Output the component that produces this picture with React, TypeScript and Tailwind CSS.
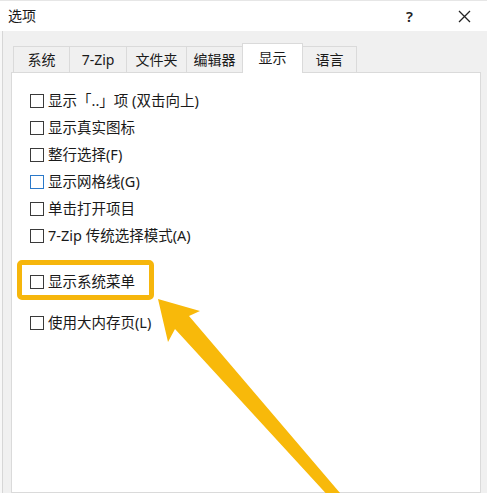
import React from "react";

const FONT = { fontFamily: '"Noto Sans", "Noto Sans CJK SC", sans-serif' };

function Box({ blue }: { blue?: boolean }) {
  return (
    <span
      className={
        "inline-block w-[14px] h-[14px] shrink-0 border bg-white " +
        (blue ? "border-[#2b79c9]" : "border-[#3a3a3a]")
      }
    />
  );
}

function Row({ label, blue, className }: { label: string; blue?: boolean; className?: string }) {
  return (
    <div className={"flex items-center h-[27px] gap-[4px] " + (className ?? "")}>
      <Box blue={blue} />
      <span className="text-[14.5px] leading-none text-[#1a1a1a] whitespace-nowrap">{label}</span>
    </div>
  );
}

const tabs = [
  { label: "系统", w: "w-[56px]" },
  { label: "7-Zip", w: "w-[57px]" },
  { label: "文件夹", w: "w-[60px]" },
  { label: "编辑器", w: "w-[56px]" },
];

export default function App() {
  return (
    <div className="relative w-[487px] h-[493px] overflow-hidden bg-[#f0f0f0] flex flex-col" style={FONT}>
      {/* title bar */}
      <div className="h-[31px] shrink-0 bg-white flex items-center justify-between pl-[8px] pr-[16px] border-t border-[#e6e6e6]">
        <span className="text-[14px] leading-none text-[#1a1a1a]">选项</span>
        <div className="flex items-center gap-[45px]">
          <span className="text-[15px] leading-none text-[#222] font-semibold">?</span>
          <svg width="13" height="13" viewBox="0 0 13 13">
            <path d="M1 1 L12 12 M12 1 L1 12" stroke="#222" strokeWidth="1.3" fill="none" />
          </svg>
        </div>
      </div>

      {/* body */}
      <div className="flex-1 flex">
        <div className="w-[3px] bg-[#f7f7f7] border-r border-[#d6d6d6]" />
        <div className="flex-1 pl-[8px] pr-[6px] pt-[12px] flex flex-col">
          {/* tabs */}
          <div className="flex items-end h-[29px] pl-[2px]">
            {tabs.map((t) => (
              <div
                key={t.label}
                className={
                  t.w +
                  " h-[26px] flex items-center justify-center border-t border-l border-[#dadada] bg-[#f0f0f0] text-[14px] leading-none text-[#1a1a1a]"
                }
              >
                {t.label}
              </div>
            ))}
            <div className="w-[61px] h-[30px] relative z-10 -mb-px flex items-start justify-center pt-[7px] bg-white border-t border-l border-r border-[#dadada] text-[14px] leading-none text-[#1a1a1a]">
              显示
            </div>
            <div className="w-[54px] h-[26px] flex items-center justify-center border-t border-r border-[#dadada] bg-[#f0f0f0] text-[14px] leading-none text-[#1a1a1a]">
              语言
            </div>
          </div>
          {/* panel */}
          <div className="flex-1 bg-white border border-[#dadada] pl-[18px] pt-[14px] flex flex-col">
            <Row label="显示「..」项 (双击向上)" />
            <Row label="显示真实图标" />
            <Row label="整行选择(F)" />
            <Row label="显示网格线(G)" blue />
            <Row label="单击打开项目" />
            <Row label="7-Zip 传统选择模式(A)" />
            <Row label="显示系统菜单" className="mt-[19px]" />
            <Row label="使用大内存页(L)" className="mt-[14px]" />
          </div>
        </div>
      </div>

      {/* highlight box */}
      <div className="absolute left-[17px] top-[260px] w-[137px] h-[40px] rounded-[5px] border-[5px] border-[#f6b60c]" />

      {/* arrow */}
      <svg className="absolute left-0 top-0 pointer-events-none" width="487" height="493" viewBox="0 0 487 493">
        <polygon
          points="158,299 200,311 189,316 346,500 332,500 175,329 168,342"
          fill="#f8b90a"
        />
      </svg>
    </div>
  );
}
